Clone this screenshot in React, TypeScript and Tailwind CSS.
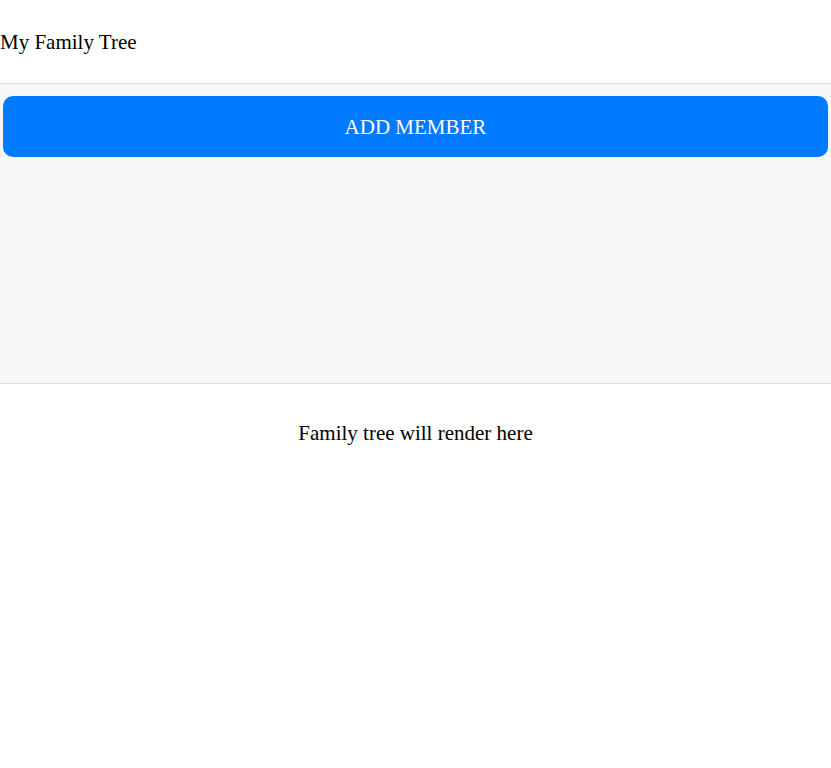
export default function App() {
  return (
    <div className="flex min-h-[768px] flex-col bg-white font-['Liberation_Serif',serif] text-black">
      {/* Header */}
      <div className="flex h-[84px] items-center border-b border-[#dddddd]">
        <span className="text-[21px] leading-[24px]">My Family Tree</span>
      </div>
      {/* Controls */}
      <div className="h-[300px] border-b border-[#dddddd] bg-[#f7f7f7] px-[3px] pt-[12px]">
        <button className="flex h-[61px] w-full items-center justify-center rounded-[10px] bg-[#007aff] text-[21px] leading-[24px] text-white">
          ADD MEMBER
        </button>
      </div>
      {/* Tree */}
      <div className="flex justify-center pt-[37px]">
        <span className="text-[21px] leading-[24px]">Family tree will render here</span>
      </div>
    </div>
  );
}
